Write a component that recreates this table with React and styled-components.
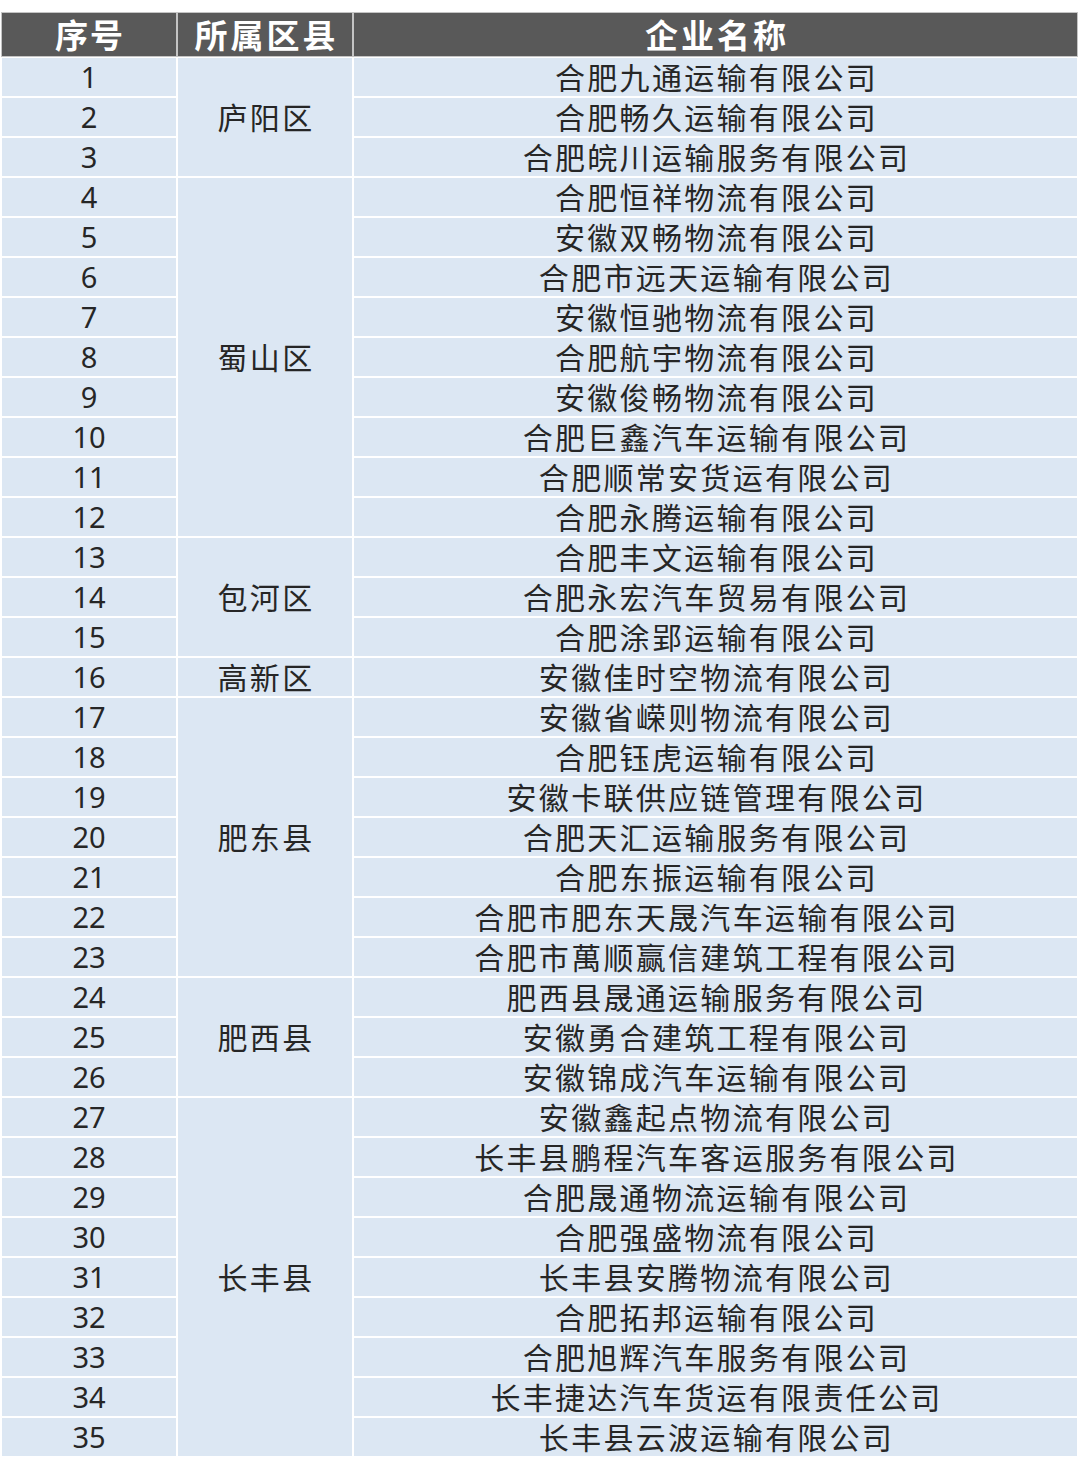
import React from 'react';
import styled, { createGlobalStyle } from 'styled-components';

const GlobalStyle = createGlobalStyle`
    html, body {
        margin: 0;
        padding: 0;
        background: #ffffff;
    }

    body {
        font-family: "Noto Sans", "Noto Sans CJK SC", sans-serif;
    }
`;

const Page = styled.div`
    width: 1080px;
    height: 1477px;
    padding: 13px 0 0 2px;
    box-sizing: border-box;
`;

const Grid = styled.div`
    display: grid;
    grid-template-columns: 174px 174px 723px;
    grid-template-rows: 43px repeat(35, 38px);
    gap: 2px;
`;

const HeadCell = styled.div`
    display: flex;
    align-items: center;
    justify-content: center;
    padding-left: ${(p) => p.$spacing}px;
    box-sizing: border-box;
    background: #595959;
    box-shadow: 0 0 0 1px #c4c4c4;
    color: #ffffff;
    font-family: "Noto Sans CJK SC", sans-serif;
    font-weight: 700;
    font-size: 33px;
    line-height: 1;
    letter-spacing: ${(p) => p.$spacing}px;
`;

const Cell = styled.div`
    display: flex;
    align-items: center;
    justify-content: center;
    box-sizing: border-box;
    background: #dce7f3;
    color: #262626;
    line-height: 1;
    white-space: nowrap;
`;

const NumCell = styled(Cell)`
    font-family: "Noto Sans", sans-serif;
    font-size: 29px;
    padding-bottom: 2px;
`;

const TextCell = styled(Cell)`
    font-family: "Noto Sans CJK SC", sans-serif;
    font-size: 30px;
    letter-spacing: 2.3px;
    padding-left: 2px;
    padding-bottom: 3px;
`;

const DistrictCell = styled(TextCell)`
    grid-column: 2;
    grid-row: ${(p) => p.$start + 1} / span ${(p) => p.$span};
`;

const districts = [
    { name: '庐阳区', start: 1, span: 3 },
    { name: '蜀山区', start: 4, span: 9 },
    { name: '包河区', start: 13, span: 3 },
    { name: '高新区', start: 16, span: 1 },
    { name: '肥东县', start: 17, span: 7 },
    { name: '肥西县', start: 24, span: 3 },
    { name: '长丰县', start: 27, span: 9 },
];

const companies = [
    '合肥九通运输有限公司',
    '合肥畅久运输有限公司',
    '合肥皖川运输服务有限公司',
    '合肥恒祥物流有限公司',
    '安徽双畅物流有限公司',
    '合肥市远天运输有限公司',
    '安徽恒驰物流有限公司',
    '合肥航宇物流有限公司',
    '安徽俊畅物流有限公司',
    '合肥巨鑫汽车运输有限公司',
    '合肥顺常安货运有限公司',
    '合肥永腾运输有限公司',
    '合肥丰文运输有限公司',
    '合肥永宏汽车贸易有限公司',
    '合肥涂郢运输有限公司',
    '安徽佳时空物流有限公司',
    '安徽省嵘则物流有限公司',
    '合肥钰虎运输有限公司',
    '安徽卡联供应链管理有限公司',
    '合肥天汇运输服务有限公司',
    '合肥东振运输有限公司',
    '合肥市肥东天晟汽车运输有限公司',
    '合肥市萬顺赢信建筑工程有限公司',
    '肥西县晟通运输服务有限公司',
    '安徽勇合建筑工程有限公司',
    '安徽锦成汽车运输有限公司',
    '安徽鑫起点物流有限公司',
    '长丰县鹏程汽车客运服务有限公司',
    '合肥晟通物流运输有限公司',
    '合肥强盛物流有限公司',
    '长丰县安腾物流有限公司',
    '合肥拓邦运输有限公司',
    '合肥旭辉汽车服务有限公司',
    '长丰捷达汽车货运有限责任公司',
    '长丰县云波运输有限公司',
];

export default function App() {
    return (
        <Page>
            <GlobalStyle />
            <Grid>
                <HeadCell $spacing={2}>序号</HeadCell>
                <HeadCell $spacing={3}>所属区县</HeadCell>
                <HeadCell $spacing={3}>企业名称</HeadCell>

                {companies.map((name, i) => (
                    <React.Fragment key={name}>
                        <NumCell style={{ gridRow: i + 2, gridColumn: 1 }}>{i + 1}</NumCell>
                        <TextCell style={{ gridRow: i + 2, gridColumn: 3 }}>{name}</TextCell>
                    </React.Fragment>
                ))}

                {districts.map((d) => (
                    <DistrictCell key={d.name} $start={d.start} $span={d.span}>
                        {d.name}
                    </DistrictCell>
                ))}
            </Grid>
        </Page>
    );
}
